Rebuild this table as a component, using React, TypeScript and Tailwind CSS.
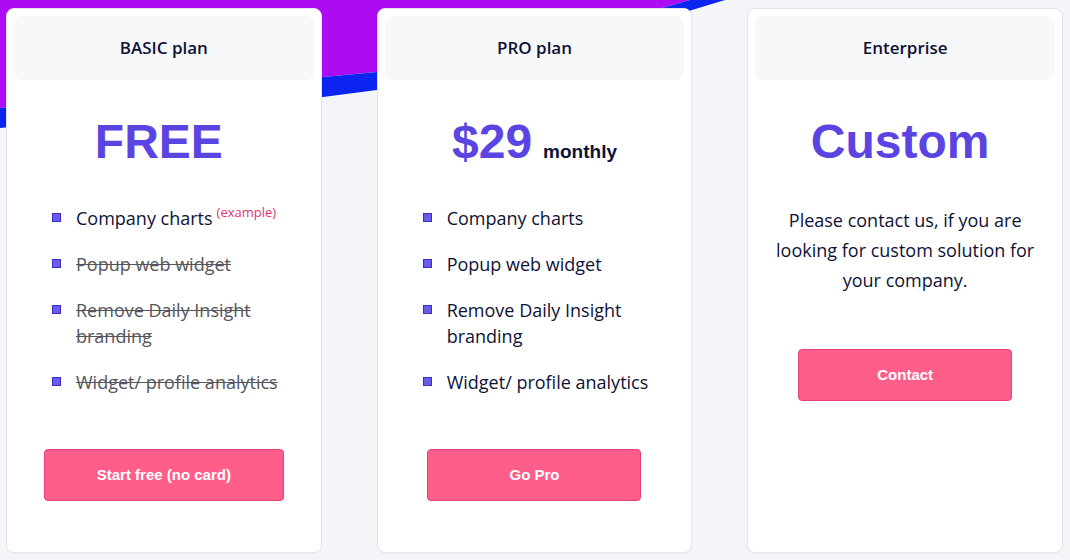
import React from 'react';

type Feature = { label: string; off?: boolean; note?: string };

const basicFeatures: Feature[] = [
  { label: 'Company charts', note: '(example)' },
  { label: 'Popup web widget', off: true },
  { label: 'Remove Daily Insight branding', off: true },
  { label: 'Widget/ profile analytics', off: true },
];

const proFeatures: Feature[] = [
  { label: 'Company charts' },
  { label: 'Popup web widget' },
  { label: 'Remove Daily Insight branding' },
  { label: 'Widget/ profile analytics' },
];

const Background: React.FC = () => (
  <svg className="absolute top-0 left-0" width="1070" height="560" viewBox="0 0 1070 560">
    <polygon fill="#ad0cf2" points="0,0 690,0 620,20 520,45 377,72 323,77 0,108" />
    <polygon
      fill="#0b24f0"
      points="0,108 323,77 377,72 520,45 620,20 690,0 725,0 692,10 620,33 520,60 377,90 323,97 0,128"
    />
  </svg>
);

const FeatureList: React.FC<{ items: Feature[] }> = ({ items }) => (
  <ul className="mt-[39px] pl-[38px] pr-[12px] flex flex-col gap-[20px]">
    {items.map((f) => (
      <li key={f.label} className="flex items-start">
        <span className="mt-[8px] w-[9px] h-[9px] shrink-0 bg-[#6b5cf0] border border-[#3a2ec4]" />
        <span
          className={`ml-[15px] text-[18px] leading-[26px] ${
            f.off ? 'line-through text-[#55555c]' : 'text-[#0e1236]'
          }`}
        >
          {f.label}
          {f.note && (
            <sup className="ml-[4px] text-[13px] text-[#d9386e] relative top-[-8px]">{f.note}</sup>
          )}
        </span>
      </li>
    ))}
  </ul>
);

const PlanButton: React.FC<{ label: string }> = ({ label }) => (
  <button className="mx-auto mt-[54px] h-[52px] shrink-0 min-w-[214px] px-[52px] rounded-[4px] bg-[#ff5e8a] border border-[#e6407a] text-white text-[15px] font-bold font-['Liberation_Sans',Arial,sans-serif]">
    {label}
  </button>
);

const Card: React.FC<{ title: string; children: React.ReactNode }> = ({ title, children }) => (
  <div className="bg-white rounded-lg border border-[#e4e6eb] shadow-[0_1px_2px_rgba(0,0,0,0.04)] p-[7px] flex flex-col h-[545px]">
    <div className="h-[64px] shrink-0 rounded-lg bg-[#f7f8fa] flex items-center justify-center text-[17px] font-semibold text-[#0e1236]">
      {title}
    </div>
    {children}
  </div>
);

const Price: React.FC<{ children: React.ReactNode; className?: string }> = ({ children, className = '' }) => (
  <div
    className={`mt-[38px] h-[48px] shrink-0 flex items-baseline justify-center font-['Liberation_Sans',Arial,sans-serif] font-bold text-[48px] leading-[48px] text-[#5b45e2] ${className}`}
  >
    {children}
  </div>
);

export default function App() {
  return (
    <div className="relative w-full h-[560px] overflow-hidden bg-[#f4f5f8] font-['Open_Sans',sans-serif]">
      <Background />
      <div className="relative grid grid-cols-3 gap-[55px] pl-[6px] pr-[7px] pt-[8px]">
        <Card title="BASIC plan">
          <Price className="pr-[10px]">FREE</Price>
          <FeatureList items={basicFeatures} />
          <PlanButton label="Start free (no card)" />
        </Card>

        <Card title="PRO plan">
          <Price>
            $29
            <span className="ml-[11px] text-[19px] leading-[48px] text-[#0e1236]">monthly</span>
          </Price>
          <FeatureList items={proFeatures} />
          <PlanButton label="Go Pro" />
        </Card>

        <Card title="Enterprise">
          <Price className="pr-[10px]">Custom</Price>
          <p className="mt-[39px] px-[14px] text-center text-[18px] leading-[30px] text-[#0e1236]">
            Please contact us, if you are looking for custom solution for your company.
          </p>
          <PlanButton label="Contact" />
        </Card>
      </div>
    </div>
  );
}
